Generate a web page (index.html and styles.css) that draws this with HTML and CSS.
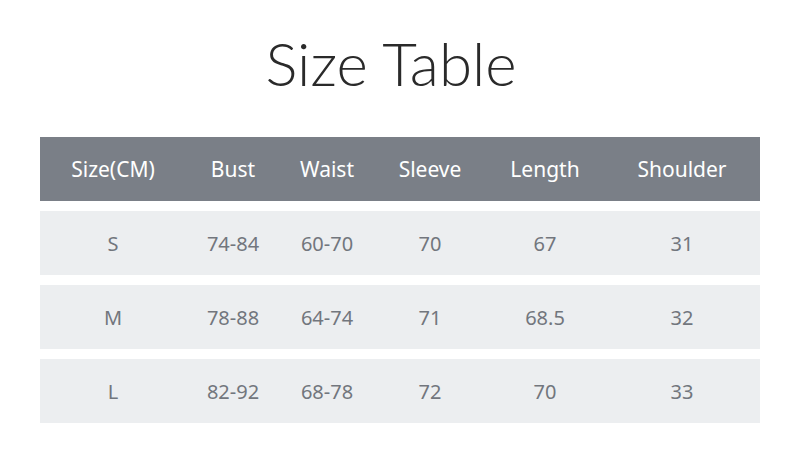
FILE: index.html
```html
<!DOCTYPE html>
<html>
<head>
<meta charset="utf-8">
<link rel="stylesheet" href="styles.css">
</head>
<body>
<div class="page">
  <h1 class="title">Size Table</h1>
  <div class="table">
    <div class="row head">
      <div>Size(CM)</div><div>Bust</div><div>Waist</div><div>Sleeve</div><div>Length</div><div>Shoulder</div>
    </div>
    <div class="row">
      <div>S</div><div>74-84</div><div>60-70</div><div>70</div><div>67</div><div>31</div>
    </div>
    <div class="row">
      <div>M</div><div>78-88</div><div>64-74</div><div>71</div><div>68.5</div><div>32</div>
    </div>
    <div class="row">
      <div>L</div><div>82-92</div><div>68-78</div><div>72</div><div>70</div><div>33</div>
    </div>
  </div>
</div>
</body>
</html>
```
FILE: styles.css
```css
html, body {
  margin: 0;
  padding: 0;
  background: #ffffff;
}
.page {
  width: 800px;
  height: 450px;
  font-family: "Noto Sans", "Open Sans", sans-serif;
  display: flex;
  flex-direction: column;
  align-items: center;
}
.title {
  margin: 0 18px 0 0;
  height: 137px;
  line-height: 127px;
  font-family: "Lato", "Open Sans", sans-serif;
  font-size: 60px;
  font-weight: 300;
  color: #2a2a2a;
  letter-spacing: 0;
}
.table {
  width: 720px;
  display: flex;
  flex-direction: column;
  gap: 10px;
}
.row {
  display: grid;
  grid-template-columns: 146px 94px 94px 112px 118px 156px;
  height: 64px;
  align-items: center;
  background: #eceef0;
  color: #72767d;
  font-size: 20px;
}
.row > div {
  text-align: center;
}
.row.head {
  background: #7a7f87;
  color: #ffffff;
  font-size: 21px;
}
```
